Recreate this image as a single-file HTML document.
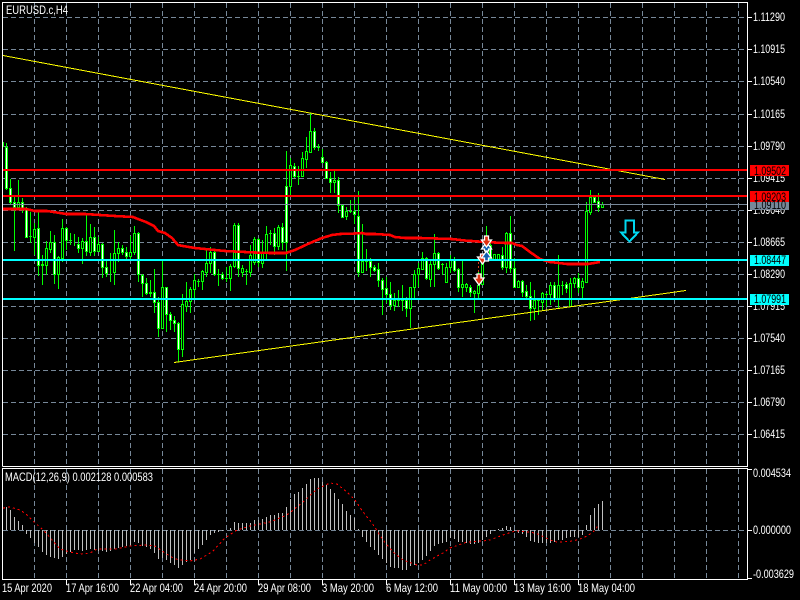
<!DOCTYPE html>
<html><head><meta charset="utf-8"><title>EURUSD.c,H4</title>
<style>html,body{margin:0;padding:0;background:#000}svg{display:block}text{font-family:"Liberation Sans",sans-serif;font-size:12px;fill:#fff}</style></head>
<body>
<svg width="800" height="600" viewBox="0 0 800 600" xmlns="http://www.w3.org/2000/svg">
<rect width="800" height="600" fill="#000"/>
<g shape-rendering="crispEdges" fill="none">
<path stroke="#778899" stroke-dasharray="5 3" d="M3 17.5H747M3 49.5H747M3 81.5H747M3 114.5H747M3 146.5H747M3 178.5H747M3 210.5H747M3 242.5H747M3 274.5H747M3 306.5H747M3 338.5H747M3 370.5H747M3 402.5H747M3 434.5H747M3 530.5H747"/>
<path stroke="#778899" stroke-dasharray="5 3" d="M34.5 3V465M66.5 3V465M98.5 3V465M130.5 3V465M162.5 3V465M194.5 3V465M226.5 3V465M258.5 3V465M290.5 3V465M322.5 3V465M354.5 3V465M386.5 3V465M418.5 3V465M450.5 3V465M482.5 3V465M514.5 3V465M546.5 3V465M578.5 3V465M610.5 3V465M642.5 3V465M674.5 3V465M706.5 3V465M738.5 3V465"/>
<path stroke="#778899" stroke-dasharray="5 3" d="M34.5 469V579M66.5 469V579M98.5 469V579M130.5 469V579M162.5 469V579M194.5 469V579M226.5 469V579M258.5 469V579M290.5 469V579M322.5 469V579M354.5 469V579M386.5 469V579M418.5 469V579M450.5 469V579M482.5 469V579M514.5 469V579M546.5 469V579M578.5 469V579M610.5 469V579M642.5 469V579M674.5 469V579M706.5 469V579M738.5 469V579"/>
<!-- wicks -->
<path stroke="#00ff00" d="M3.5 142V147M6.5 143V190M10.5 179V205M14.5 197V251M18.5 180V209M22.5 198V213M26.5 207V237M30.5 212V243M29 236.5h3M34.5 223V255M38.5 212V276M42.5 255V285M46.5 241V275M50.5 231V253M54.5 235V284M58.5 256V289M62.5 219V262M66.5 227V250M70.5 233V245M69 240.5h3M74.5 234V246M78.5 237V253M82.5 238V264M86.5 215V256M90.5 224V256M94.5 227V256M98.5 237V252M102.5 243V278M106.5 260V277M110.5 253V282M114.5 230V285M118.5 242V262M122.5 245V255M126.5 247V260M130.5 236V260M134.5 226V255M138.5 232V282M142.5 274V297M146.5 278V295M150.5 280V297M154.5 269V313M158.5 297V337M162.5 261V328M166.5 287V332M170.5 312V330M174.5 316V332M178.5 322V362M182.5 294V357M186.5 282V312M190.5 287V313M194.5 274V298M198.5 279V287M197 281.5h3M202.5 270V290M206.5 248V277M210.5 247V273M214.5 250V276M218.5 269V286M217 274.5h3M222.5 272V280M226.5 267V282M225 278.5h3M230.5 264V291M234.5 223V268M238.5 223V277M242.5 265V277M246.5 269V285M245 271.5h3M250.5 245V277M254.5 237V265M258.5 238V267M262.5 240V268M266.5 226V260M270.5 230V245M269 233.5h3M274.5 228V255M278.5 225V250M282.5 223V250M286.5 151V271M290.5 158V195M294.5 163V178M298.5 166V185M297 176.5h3M302.5 152V177M306.5 137V168M310.5 113V152M314.5 128V150M318.5 144V151M317 147.5h3M322.5 149V163M326.5 161V179M330.5 172V193M334.5 171V193M338.5 177V213M342.5 205V217M346.5 207V220M350.5 200V213M349 211.5h3M354.5 200V224M358.5 191V277M362.5 224V273M366.5 249V271M365 261.5h3M370.5 258V277M374.5 265V272M378.5 263V287M382.5 278V315M386.5 277V303M390.5 282V310M394.5 293V311M398.5 290V307M397 300.5h3M402.5 285V311M401 300.5h3M406.5 297V317M410.5 287V328M414.5 270V298M418.5 263V287M422.5 252V270M426.5 257V280M430.5 260V287M434.5 234V287M438.5 252V270M442.5 263V275M441 264.5h3M446.5 263V282M450.5 255V273M454.5 257V272M458.5 268V292M462.5 261V297M466.5 283V292M470.5 285V297M474.5 290V313M478.5 272V298M482.5 258V285M486.5 226V258M490.5 243V258M494.5 254V259M498.5 254V259M502.5 247V270M506.5 232V273M510.5 216V273M514.5 258V288M518.5 280V288M522.5 280V297M526.5 285V298M530.5 282V321M534.5 290V320M538.5 298V315M537 300.5h3M542.5 292V310M546.5 293V307M545 294.5h3M550.5 282V305M554.5 282V302M558.5 255V308M562.5 281V295M561 285.5h3M566.5 282V293M570.5 278V306M574.5 277V288M578.5 273V293M582.5 278V298M586.5 202V283M590.5 190V215M594.5 195V203M598.5 193V212M602.5 202V207"/>
<!-- bull bodies: black fill -->
<path stroke="#00ff00" fill="#000" d="M17.5 202.5h2v5h-2zM33.5 229.5h2v8h-2zM41.5 264.5h2v1h-2zM45.5 248.5h2v17h-2zM49.5 242.5h2v7h-2zM57.5 257.5h2v17h-2zM61.5 228.5h2v30h-2zM81.5 241.5h2v7h-2zM89.5 237.5h2v15h-2zM97.5 244.5h2v7h-2zM113.5 253.5h2v19h-2zM117.5 248.5h2v5h-2zM129.5 252.5h2v4h-2zM133.5 233.5h2v19h-2zM149.5 292.5h2v1h-2zM161.5 287.5h2v41h-2zM181.5 304.5h2v45h-2zM185.5 301.5h2v5h-2zM189.5 289.5h2v12h-2zM193.5 280.5h2v9h-2zM201.5 271.5h2v10h-2zM205.5 263.5h2v9h-2zM209.5 252.5h2v11h-2zM229.5 266.5h2v12h-2zM233.5 225.5h2v41h-2zM241.5 268.5h2v4h-2zM249.5 255.5h2v17h-2zM253.5 239.5h2v23h-2zM261.5 253.5h2v10h-2zM265.5 234.5h2v19h-2zM277.5 227.5h2v19h-2zM289.5 165.5h2v21h-2zM301.5 158.5h2v18h-2zM305.5 151.5h2v8h-2zM309.5 131.5h2v21h-2zM333.5 180.5h2v2h-2zM345.5 211.5h2v5h-2zM361.5 261.5h2v11h-2zM393.5 300.5h2v5h-2zM409.5 287.5h2v21h-2zM413.5 274.5h2v13h-2zM417.5 268.5h2v6h-2zM421.5 258.5h2v11h-2zM429.5 264.5h2v15h-2zM433.5 253.5h2v11h-2zM445.5 267.5h2v15h-2zM449.5 259.5h2v8h-2zM461.5 284.5h2v3h-2zM465.5 284.5h2v3h-2zM473.5 291.5h2v2h-2zM477.5 285.5h2v8h-2zM481.5 258.5h2v26h-2zM485.5 245.5h2v13h-2zM493.5 254.5h2v5h-2zM497.5 254.5h2v5h-2zM505.5 233.5h2v34h-2zM517.5 281.5h2v6h-2zM533.5 300.5h2v8h-2zM541.5 293.5h2v9h-2zM549.5 285.5h2v9h-2zM557.5 285.5h2v14h-2zM569.5 283.5h2v23h-2zM573.5 278.5h2v5h-2zM581.5 281.5h2v6h-2zM585.5 211.5h2v71h-2zM589.5 197.5h2v15h-2zM601.5 204.5h2v3h-2z"/>
<!-- bear bodies: white fill -->
<path stroke="#00ff00" fill="#fff" d="M5.5 147.5h2v41h-2zM9.5 188.5h2v14h-2zM13.5 202.5h2v5h-2zM21.5 202.5h2v6h-2zM25.5 208.5h2v29h-2zM37.5 228.5h2v37h-2zM53.5 242.5h2v32h-2zM65.5 228.5h2v12h-2zM77.5 244.5h2v4h-2zM85.5 241.5h2v10h-2zM93.5 237.5h2v14h-2zM101.5 244.5h2v23h-2zM105.5 267.5h2v6h-2zM121.5 248.5h2v4h-2zM125.5 252.5h2v4h-2zM137.5 233.5h2v41h-2zM141.5 275.5h2v8h-2zM145.5 283.5h2v10h-2zM153.5 292.5h2v10h-2zM157.5 302.5h2v26h-2zM165.5 287.5h2v27h-2zM169.5 314.5h2v6h-2zM173.5 320.5h2v3h-2zM177.5 323.5h2v26h-2zM213.5 252.5h2v22h-2zM221.5 274.5h2v4h-2zM237.5 225.5h2v43h-2zM257.5 239.5h2v23h-2zM273.5 233.5h2v13h-2zM281.5 227.5h2v15h-2zM285.5 186.5h2v56h-2zM293.5 166.5h2v10h-2zM313.5 131.5h2v16h-2zM321.5 157.5h2v5h-2zM325.5 162.5h2v16h-2zM329.5 178.5h2v4h-2zM337.5 180.5h2v25h-2zM341.5 205.5h2v12h-2zM353.5 211.5h2v3h-2zM357.5 216.5h2v56h-2zM369.5 261.5h2v6h-2zM373.5 267.5h2v3h-2zM377.5 269.5h2v11h-2zM381.5 280.5h2v9h-2zM385.5 288.5h2v6h-2zM389.5 294.5h2v11h-2zM405.5 300.5h2v8h-2zM425.5 258.5h2v20h-2zM437.5 253.5h2v15h-2zM453.5 259.5h2v11h-2zM457.5 269.5h2v18h-2zM469.5 287.5h2v5h-2zM489.5 245.5h2v13h-2zM501.5 255.5h2v12h-2zM509.5 233.5h2v35h-2zM513.5 268.5h2v19h-2zM521.5 281.5h2v11h-2zM525.5 291.5h2v5h-2zM529.5 296.5h2v12h-2zM553.5 285.5h2v14h-2zM565.5 284.5h2v4h-2zM577.5 278.5h2v9h-2zM593.5 197.5h2v5h-2zM597.5 201.5h2v6h-2z"/>
</g>
<!-- MA -->
<polyline fill="none" stroke="#ff0000" stroke-width="2.6" shape-rendering="crispEdges" points="3,209 26,209 35,211 47,211 60,213 66,214 85,214 100,215 115,216 133,217 138,219 146,222 154,226 158,231 165,233 172,238 178,245 183,246 195,248 215,250 225,251 255,252.5 270,253 286,253 295,250 310,243 322,238 332,235 340,234 355,233.5 362,233 366,234 375,234 390,235 395,237 405,238 420,238 452,239 465,240.5 485,242 505,243 512,243 517,245 522,246 530,252 540,259 550,262 567,264 588,264 600,262"/>
<!-- trend lines -->
<g fill="none" stroke="#ffff00" stroke-width="1" shape-rendering="crispEdges">
<line x1="3" y1="55.5" x2="665" y2="179.5"/>
<line x1="174" y1="362.5" x2="686" y2="290.5"/>
</g>
<!-- horizontal levels -->
<g shape-rendering="crispEdges">
<rect x="3" y="169" width="744" height="2" fill="#ff0000"/>
<rect x="3" y="195" width="744" height="2" fill="#ff0000"/>
<rect x="3" y="204" width="744" height="1" fill="#778899"/>
<rect x="3" y="259" width="744" height="2" fill="#00ffff"/>
<rect x="3" y="298" width="744" height="2" fill="#00ffff"/>
</g>
<!-- trade arrows -->
<path d="M478.5 272V262M482.5 262V258" stroke="#d04020" stroke-dasharray="2 2" fill="none"/>
<g stroke="#fff" stroke-width="1.3">
<path d="M474 278h3v-4h4v4h3l-5 7z" fill="#e03010"/>
<path d="M477.500 257h3v-3h4v3h3l-5 7z" fill="#e03010"/>
<path d="M481.500 258l5-7 5 7h-3v3h-4v-3z" fill="#1060b0"/>
<path d="M481.500 249l5-7 5 7h-3v2h-4v-2z" fill="#1060b0"/>
<path d="M481.500 240h3v-4h4v4h3l-5 7z" fill="#e03010"/>
</g>
<!-- big arrow -->
<path d="M625.500 220.500h8.500v12h4l-8.500 9-8.500-9h4.500z" fill="#000" stroke="#00d8f0" stroke-width="2" shape-rendering="crispEdges"/>
<!-- histogram -->
<path shape-rendering="crispEdges" fill="none" stroke="#c0c0c0" d="M6.500 530v-23M10.500 530v-20M14.500 530v-13M18.500 530v-9M22.500 530v-5M26.500 530v4M30.500 530v8M34.500 530v13M38.500 530v17M42.500 530v22M46.500 530v25M50.500 530v27M54.500 530v28M58.500 530v29M62.500 530v27M66.500 530v24M70.500 530v22M74.500 530v20M78.500 530v20M82.500 530v21M86.500 530v20M90.500 530v19M94.500 530v20M98.500 530v21M102.500 530v21M106.500 530v22M110.500 530v21M114.500 530v19M118.500 530v18M122.500 530v17M126.500 530v16M130.500 530v15M134.500 530v12M138.500 530v13M142.500 530v16M146.500 530v17M150.500 530v19M154.500 530v23M158.500 530v29M162.500 530v28M166.500 530v30M170.500 530v33M174.500 530v35M178.500 530v38M182.500 530v35M186.500 530v32M190.500 530v30M194.500 530v23M198.500 530v19M202.500 530v15M206.500 530v10M210.500 530v5M214.500 530v3M218.500 530v2M222.500 530v1M230.500 530v-2M234.500 530v-8M238.500 530v-7M242.500 530v-7M246.500 530v-7M250.500 530v-7M254.500 530v-10M258.500 530v-10M262.500 530v-11M266.500 530v-13M270.500 530v-15M274.500 530v-15M278.500 530v-17M282.500 530v-17M286.500 530v-23M290.500 530v-31M294.500 530v-36M298.500 530v-38M302.500 530v-42M306.500 530v-46M310.500 530v-51M314.500 530v-52M318.500 530v-52M322.500 530v-48M326.500 530v-45M330.500 530v-41M334.500 530v-37M338.500 530v-31M342.500 530v-26M346.500 530v-19M350.500 530v-15M354.500 530v-12M358.500 530v-1M362.500 530v7M366.500 530v12M370.500 530v17M374.500 530v20M378.500 530v25M382.500 530v29M386.500 530v33M390.500 530v37M394.500 530v38M398.500 530v38M402.500 530v40M406.500 530v40M410.500 530v36M414.500 530v35M418.500 530v33M422.500 530v30M426.500 530v26M430.500 530v21M434.500 530v16M438.500 530v14M442.500 530v13M446.500 530v12M450.500 530v8M454.500 530v9M458.500 530v12M462.500 530v12M466.500 530v13M470.500 530v14M474.500 530v14M478.500 530v13M482.500 530v10M486.500 530v7M490.500 530v4M494.500 530v1M498.500 530v-1M502.500 530v-2M506.500 530v-4M510.500 530v-3M514.500 530v1M518.500 530v3M522.500 530v4M526.500 530v7M530.500 530v11M534.500 530v12M538.500 530v13M542.500 530v13M546.500 530v13M550.500 530v13M554.500 530v12M558.500 530v10M562.500 530v10M566.500 530v8M570.500 530v7M574.500 530v7M578.500 530v7M582.500 530v5M586.500 530v-5M590.500 530v-15M594.500 530v-22M598.500 530v-26M602.500 530v-29"/>
<!-- signal -->
<polyline fill="none" stroke="#ff0000" stroke-dasharray="2 3" shape-rendering="crispEdges" points="3,508 10,507 20,510 26,514 33,521 40,527 47,534 53,541 60,549 70,552 80,554 90,553 97,549 115,549 130,546 145,545 155,546 165,553 175,559 190,561 200,559 212,552 225,538 237,530 250,526 270,522 287,515 303,502 317,489 330,483 337,484 348,493 355,500 363,512 372,523 383,540 393,552 403,560 417,565 423,565 430,560 443,553 450,548 467,542 483,541 490,540 503,535 515,531 530,532 538,534 550,540 557,542 563,542 573,541 580,539 587,536 593,532 598,526"/>
<!-- frames and ticks -->
<g shape-rendering="crispEdges" fill="none" stroke="#fff">
<path d="M2.500 466.500V2.500H747.500V466.500H2.500"/>
<path d="M2.500 468.500H747.500V579.500H2.500Z"/>
<path d="M747 17.500h5M747 49.500h5M747 81.500h5M747 114.500h5M747 146.500h5M747 178.500h5M747 210.500h5M747 242.500h5M747 274.500h5M747 306.500h5M747 338.500h5M747 370.500h5M747 402.500h5M747 434.500h5M747 469.500h5M747 530.500h5M747 578.500h5"/>
<path d="M66.500 579v6M130.500 579v6M194.500 579v6M258.500 579v6M322.500 579v6M386.500 579v6M450.500 579v6M514.500 579v6M578.500 579v6"/>
</g>
<!-- title text -->
<text x="6" y="14" textLength="62" lengthAdjust="spacingAndGlyphs">EURUSD.c,H4</text>
<text x="5" y="481" textLength="148" lengthAdjust="spacingAndGlyphs">MACD(12,26,9) 0.002128 0.000583</text>
<!-- price axis -->
<g>
<text x="753" y="21" textLength="32" lengthAdjust="spacingAndGlyphs">1.11290</text>
<text x="753" y="53" textLength="32" lengthAdjust="spacingAndGlyphs">1.10915</text>
<text x="753" y="85" textLength="32" lengthAdjust="spacingAndGlyphs">1.10540</text>
<text x="753" y="118" textLength="32" lengthAdjust="spacingAndGlyphs">1.10165</text>
<text x="753" y="150" textLength="32" lengthAdjust="spacingAndGlyphs">1.09790</text>
<text x="753" y="182" textLength="32" lengthAdjust="spacingAndGlyphs">1.09415</text>
<text x="753" y="214" textLength="32" lengthAdjust="spacingAndGlyphs">1.09040</text>
<text x="753" y="246" textLength="32" lengthAdjust="spacingAndGlyphs">1.08665</text>
<text x="753" y="278" textLength="32" lengthAdjust="spacingAndGlyphs">1.08290</text>
<text x="753" y="310" textLength="32" lengthAdjust="spacingAndGlyphs">1.07915</text>
<text x="753" y="342" textLength="32" lengthAdjust="spacingAndGlyphs">1.07540</text>
<text x="753" y="374" textLength="32" lengthAdjust="spacingAndGlyphs">1.07165</text>
<text x="753" y="406" textLength="32" lengthAdjust="spacingAndGlyphs">1.06790</text>
<text x="753" y="438" textLength="32" lengthAdjust="spacingAndGlyphs">1.06415</text>
<text x="753" y="477" textLength="38" lengthAdjust="spacingAndGlyphs">0.004534</text>
<text x="753" y="534" textLength="38" lengthAdjust="spacingAndGlyphs">0.000000</text>
<text x="753" y="578" textLength="41" lengthAdjust="spacingAndGlyphs">-0.003629</text>
</g>
<!-- price badges -->
<g shape-rendering="crispEdges">
<rect x="750" y="165" width="39" height="11" fill="#ff0000"/>
<rect x="750" y="191" width="39" height="11" fill="#ff0000"/>
<rect x="750" y="202" width="39" height="8" fill="#778899"/>
<rect x="750" y="255" width="39" height="11" fill="#00ffff"/>
<rect x="750" y="294" width="39" height="11" fill="#00ffff"/>
</g>
<g style="fill:#000">
<text x="754" y="175" textLength="32" lengthAdjust="spacingAndGlyphs" style="fill:#000">1.09502</text>
<text x="754" y="201" textLength="32" lengthAdjust="spacingAndGlyphs" style="fill:#000">1.09203</text>
<text x="754" y="209" textLength="32" lengthAdjust="spacingAndGlyphs" style="fill:#000">1.09110</text>
<text x="754" y="264" textLength="32" lengthAdjust="spacingAndGlyphs" style="fill:#000">1.08447</text>
<text x="754" y="303" textLength="32" lengthAdjust="spacingAndGlyphs" style="fill:#000">1.07991</text>
</g>
<!-- time axis -->
<text x="2" y="592" textLength="50" lengthAdjust="spacingAndGlyphs">15 Apr 2020</text>
<text x="66" y="592" textLength="53" lengthAdjust="spacingAndGlyphs">17 Apr 16:00</text>
<text x="130" y="592" textLength="53" lengthAdjust="spacingAndGlyphs">22 Apr 04:00</text>
<text x="194" y="592" textLength="53" lengthAdjust="spacingAndGlyphs">24 Apr 20:00</text>
<text x="258" y="592" textLength="53" lengthAdjust="spacingAndGlyphs">29 Apr 08:00</text>
<text x="322" y="592" textLength="52" lengthAdjust="spacingAndGlyphs">3 May 20:00</text>
<text x="386" y="592" textLength="52" lengthAdjust="spacingAndGlyphs">6 May 12:00</text>
<text x="450" y="592" textLength="57" lengthAdjust="spacingAndGlyphs">11 May 00:00</text>
<text x="514" y="592" textLength="57" lengthAdjust="spacingAndGlyphs">13 May 16:00</text>
<text x="578" y="592" textLength="57" lengthAdjust="spacingAndGlyphs">18 May 04:00</text>
</svg>
</body></html>
